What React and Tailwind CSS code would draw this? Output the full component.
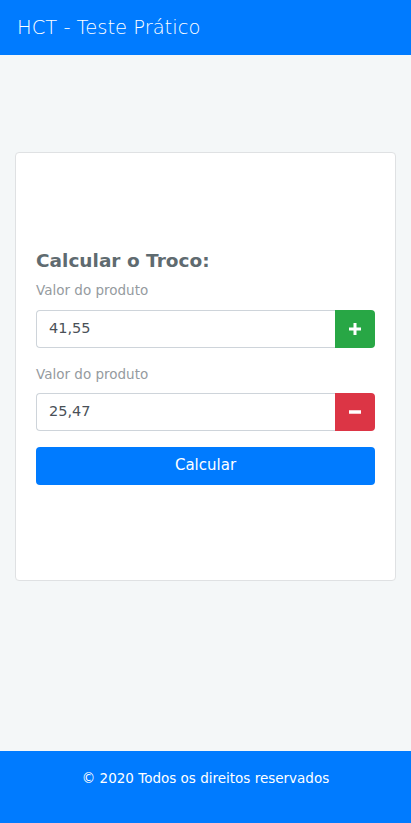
import React from "react";

export default function App() {
  const font = { fontFamily: '"DejaVu Sans", "Open Sans", sans-serif' };
  return (
    <div className="min-h-[823px] flex flex-col bg-[#f4f7f8]" style={font}>
      <header className="h-[55px] bg-[#007bff] flex items-center px-[17px]">
        <span className="text-white text-[19.5px] font-light">HCT - Teste Prático</span>
      </header>
      <main className="flex-1 px-[15px] pt-[97px]">
        <div className="h-[429px] bg-white border border-[#dfe1e3] rounded-[4px] flex flex-col justify-center px-[20px]">
          <h2 className="text-[18.5px] font-bold text-[#5f6b70] leading-[24px] mb-[8px]">Calcular o Troco:</h2>
          <label className="text-[13.5px] text-[#959ba0] font-normal leading-[18px] mb-[11px]">Valor do produto</label>
          <div className="flex h-[38px]">
            <div className="flex-1 border border-[#ced4da] border-r-0 rounded-l-[4px] flex items-center px-[12px] text-[14.5px] text-[#495057] font-normal">41,55</div>
            <div className="w-[40px] bg-[#28a745] rounded-r-[4px] flex items-center justify-center">
              <svg width="14" height="14" viewBox="0 0 14 14"><path d="M7 1v12M1 7h12" stroke="white" strokeWidth="3" /></svg>
            </div>
          </div>
          <label className="text-[13.5px] text-[#959ba0] font-normal leading-[18px] mt-[17px] mb-[10px]">Valor do produto</label>
          <div className="flex h-[38px]">
            <div className="flex-1 border border-[#ced4da] border-r-0 rounded-l-[4px] flex items-center px-[12px] text-[14.5px] text-[#495057] font-normal">25,47</div>
            <div className="w-[40px] bg-[#dc3545] rounded-r-[4px] flex items-center justify-center">
              <svg width="14" height="14" viewBox="0 0 14 14"><path d="M1 7h12" stroke="white" strokeWidth="3.5" /></svg>
            </div>
          </div>
          <button className="mt-[16px] h-[38px] bg-[#007bff] rounded-[4px] text-white text-[15px] font-normal">Calcular</button>
        </div>
      </main>
      <footer className="h-[72px] bg-[#007bff] flex items-center justify-center pb-[17px]">
        <span className="text-white text-[13.5px] font-normal">© 2020 Todos os direitos reservados</span>
      </footer>
    </div>
  );
}
